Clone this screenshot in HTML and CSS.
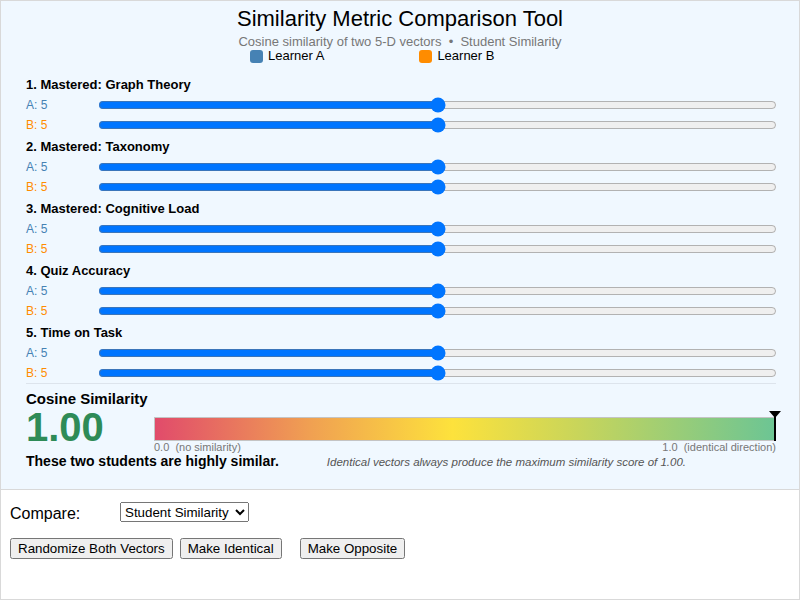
FILE: index.html
```html
<!DOCTYPE html>
<html>
<head>
<meta charset="utf-8">
<link rel="stylesheet" href="styles.css">
</head>
<body>
<div class="frame">
  <div class="panel">
    <h1 class="title">Similarity Metric Comparison Tool</h1>
    <div class="subtitle">Cosine similarity of two 5-D vectors &nbsp;•&nbsp; Student Similarity</div>
    <div class="legend">
      <span class="legend-item"><span class="swatch swatch-a"></span>Learner A</span>
      <span class="legend-item"><span class="swatch swatch-b"></span>Learner B</span>
    </div>
    <div class="dims">
      <div class="dim">
        <div class="dim-label">1. Mastered: Graph Theory</div>
        <div class="row"><span class="row-label lbl-a">A: 5</span><input class="slider" type="range" min="0" max="10" value="5"></div>
        <div class="row"><span class="row-label lbl-b">B: 5</span><input class="slider" type="range" min="0" max="10" value="5"></div>
      </div>
      <div class="dim">
        <div class="dim-label">2. Mastered: Taxonomy</div>
        <div class="row"><span class="row-label lbl-a">A: 5</span><input class="slider" type="range" min="0" max="10" value="5"></div>
        <div class="row"><span class="row-label lbl-b">B: 5</span><input class="slider" type="range" min="0" max="10" value="5"></div>
      </div>
      <div class="dim">
        <div class="dim-label">3. Mastered: Cognitive Load</div>
        <div class="row"><span class="row-label lbl-a">A: 5</span><input class="slider" type="range" min="0" max="10" value="5"></div>
        <div class="row"><span class="row-label lbl-b">B: 5</span><input class="slider" type="range" min="0" max="10" value="5"></div>
      </div>
      <div class="dim">
        <div class="dim-label">4. Quiz Accuracy</div>
        <div class="row"><span class="row-label lbl-a">A: 5</span><input class="slider" type="range" min="0" max="10" value="5"></div>
        <div class="row"><span class="row-label lbl-b">B: 5</span><input class="slider" type="range" min="0" max="10" value="5"></div>
      </div>
      <div class="dim">
        <div class="dim-label">5. Time on Task</div>
        <div class="row"><span class="row-label lbl-a">A: 5</span><input class="slider" type="range" min="0" max="10" value="5"></div>
        <div class="row"><span class="row-label lbl-b">B: 5</span><input class="slider" type="range" min="0" max="10" value="5"></div>
      </div>
    </div>
    <div class="result">
      <div class="result-title">Cosine Similarity</div>
      <div class="result-main">
        <div class="value">1.00</div>
        <div class="gauge">
          <div class="bar"><div class="marker"></div></div>
          <div class="scale"><span>0.0&nbsp;&nbsp;(no similarity)</span><span>1.0&nbsp;&nbsp;(identical direction)</span></div>
        </div>
      </div>
      <div class="result-foot">
        <span class="summary">These two students are highly similar.</span>
        <span class="note">Identical vectors always produce the maximum similarity score of 1.00.</span>
      </div>
    </div>
  </div>
  <div class="controls">
    <div class="compare-row">
      <label class="compare-label">Compare:</label>
      <select class="compare-select"><option>Student Similarity</option></select>
    </div>
    <div class="button-row">
      <button class="btn btn-rand">Randomize Both Vectors</button>
      <button class="btn btn-ident">Make Identical</button>
      <button class="btn">Make Opposite</button>
    </div>
  </div>
</div>
</body>
</html>
```
FILE: styles.css
```css
html, body {
  margin: 0;
  padding: 0;
  background: #ffffff;
}
body {
  font-family: "Liberation Sans", Arial, sans-serif;
  color: #000;
}
.frame {
  width: 800px;
  height: 600px;
  box-sizing: border-box;
  border: 1px solid #d9d9d9;
  display: flex;
  flex-direction: column;
}
.panel {
  background: #f0f8ff;
  border-bottom: 1px solid #d9d9d9;
  padding: 6px 22px 0 25px;
  height: 489px;
  box-sizing: border-box;
  flex: none;
}
.title {
  margin: 0 0 0 -3px;
  font-size: 22px;
  font-weight: normal;
  line-height: 24px;
  text-align: center;
}
.subtitle {
  margin: 4px 0 0 -3px;
  font-size: 13px;
  line-height: 14px;
  color: #777;
  text-align: center;
}
.legend {
  display: flex;
  font-size: 13px;
  line-height: 14px;
  padding-left: 224px;
}
.legend-item {
  display: flex;
  align-items: center;
  margin-right: 95px;
}
.swatch {
  width: 13px;
  height: 13px;
  border-radius: 3px;
  margin-right: 5px;
}
.swatch-a { background: #4682b4; }
.swatch-b { background: #ff8c00; }
.dims {
  margin-top: 12px;
  display: flex;
  flex-direction: column;
  gap: 2px;
}
.dim-label {
  font-size: 13px;
  font-weight: bold;
  line-height: 20px;
}
.row {
  display: flex;
  align-items: center;
  height: 20px;
}
.row-label {
  width: 70px;
  font-size: 12px;
}
.lbl-a { color: #4682b4; }
.lbl-b { color: #ff8c00; }
.slider {
  flex: 1;
  margin: 2px 0 2px 2px;
  height: 16px;
}
.result {
  border-top: 1px solid #dde4ec;
  margin-right: 1px;
}
.result-title {
  margin-top: 6px;
  font-size: 15px;
  font-weight: bold;
  line-height: 17px;
}
.result-main {
  display: flex;
}
.value {
  width: 128px;
  font-size: 40px;
  font-weight: bold;
  line-height: 40px;
  color: #2e8b57;
}
.gauge {
  flex: 1;
  padding-top: 10px;
}
.bar {
  position: relative;
  height: 22px;
  border: 1px solid #c4c4c4;
  background: linear-gradient(to right, #e14b6b 0%, #f0a052 25%, #fde23c 48%, #c9d55a 68%, #6cc594 100%);
}
.marker {
  position: absolute;
  right: -1px;
  top: -7px;
  bottom: -1px;
  width: 2px;
  background: #000;
}
.marker::before {
  content: "";
  position: absolute;
  top: 0;
  left: -5px;
  border-left: 6px solid transparent;
  border-right: 6px solid transparent;
  border-top: 7px solid #000;
}
.scale {
  display: flex;
  justify-content: space-between;
  font-size: 11px;
  line-height: 12px;
  color: #777;
}
.result-foot {
  display: flex;
  align-items: baseline;
  line-height: 17px;
}
.summary {
  font-size: 14px;
  font-weight: bold;
}
.note {
  margin-left: 48px;
  font-size: 11.5px;
  font-style: italic;
  color: #555;
}
.controls {
  padding: 12px 9px 0 9px;
}
.compare-row {
  display: flex;
  align-items: center;
  height: 20px;
}
.compare-label {
  width: 110px;
  font-size: 16px;
  padding-top: 3px;
}
.compare-select {
  font-family: "Liberation Sans", Arial, sans-serif;
  font-size: 13.33px;
  width: 129px;
  height: 20px;
}
.button-row {
  display: flex;
  margin-top: 16px;
}
.btn {
  font-family: "Liberation Sans", Arial, sans-serif;
  font-size: 13.33px;
  margin: 0;
  height: 21px;
}
.btn-rand { margin-right: 7px; }
.btn-ident { margin-right: 18px; }
```
